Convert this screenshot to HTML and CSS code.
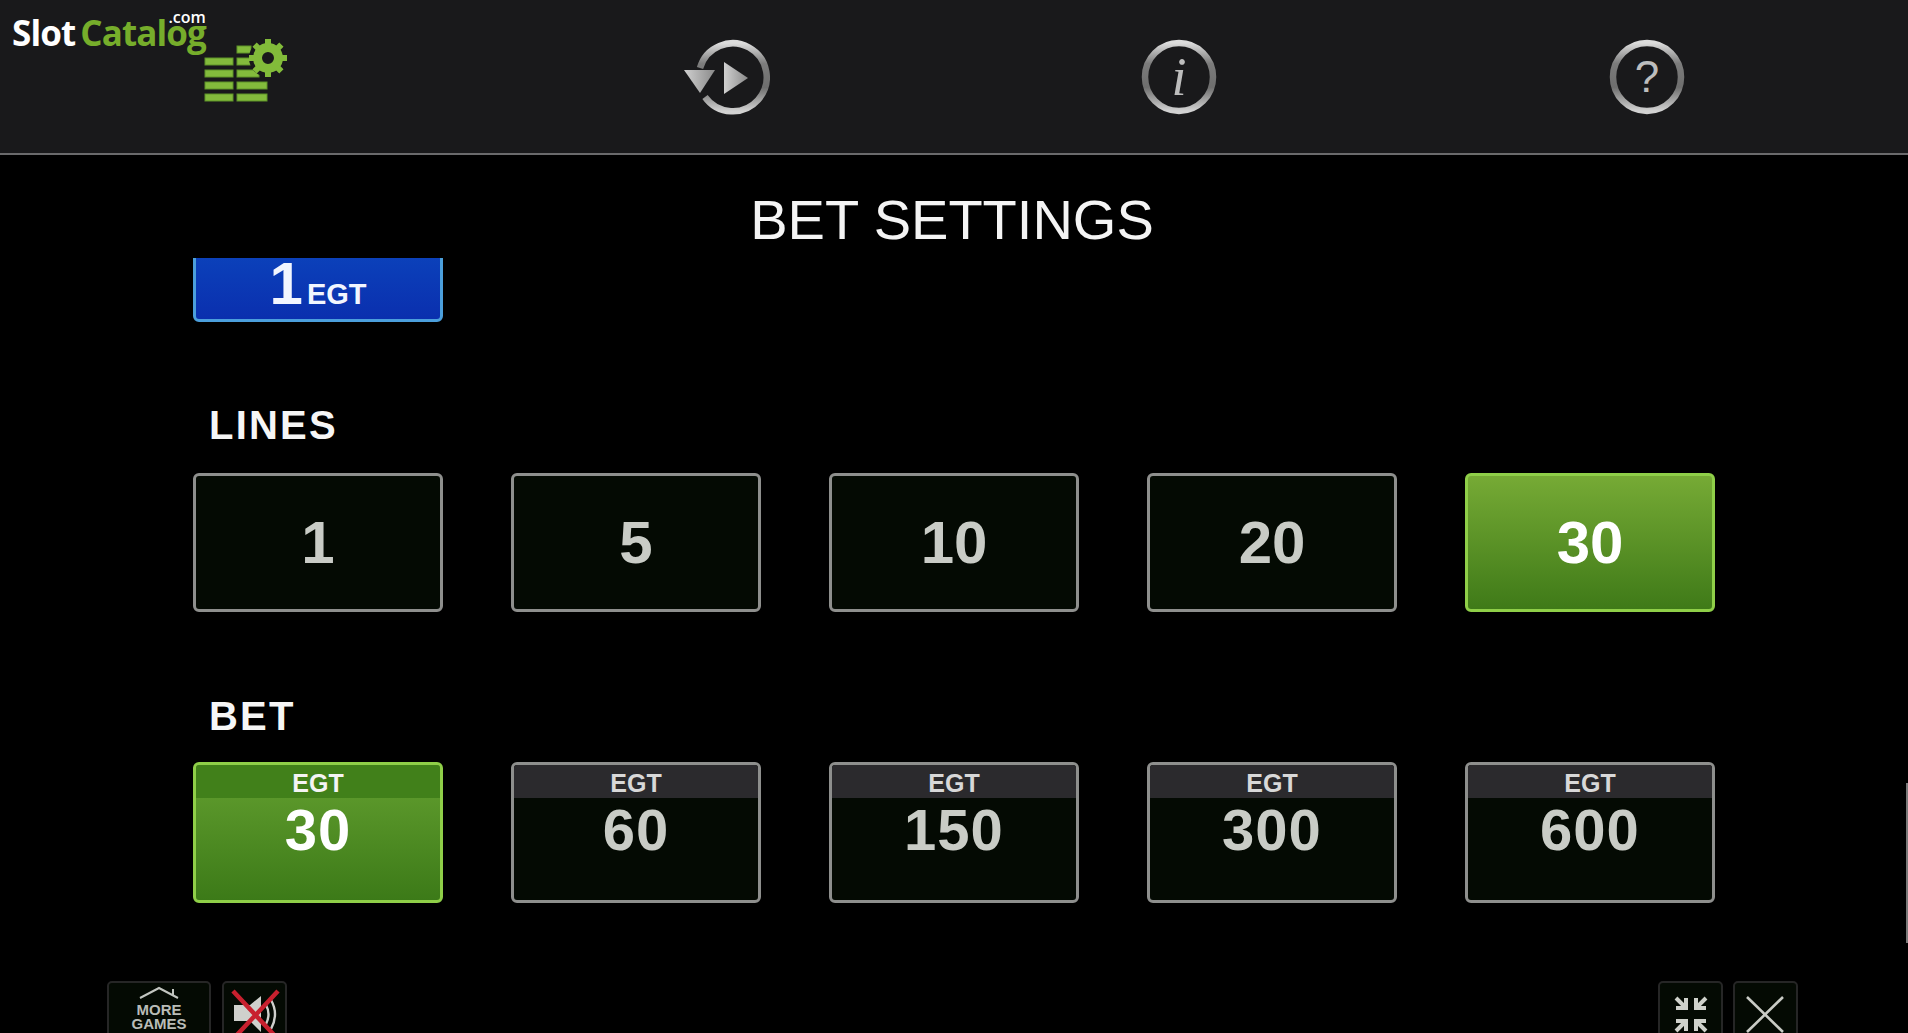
FILE: index.html
```html
<!DOCTYPE html>
<html lang="en">
<head>
    <meta charset="UTF-8">
    <title>Bet Settings</title>
    <link rel="stylesheet" href="styles.css">
</head>

<body>
<div class="page">
    <div class="logo"><span class="logo-slot">Slot</span><span class="logo-catalog">Catalog</span><span class="logo-com">.com</span></div>

    <div class="topbar">
        <svg class="icon-settings" width="86" height="66" viewBox="0 0 86 66">
            <g fill="#83bb3c" stroke="#5f9428" stroke-width="1">
                <rect x="1" y="19" width="28" height="7"/>
                <rect x="1" y="31" width="28" height="7"/>
                <rect x="1" y="43" width="28" height="7"/>
                <rect x="1" y="55" width="28" height="7"/>
                <rect x="33" y="7" width="14" height="7"/>
                <rect x="33" y="19" width="14" height="7"/>
                <rect x="33" y="31" width="22" height="7"/>
                <rect x="33" y="43" width="30" height="7"/>
                <rect x="33" y="55" width="30" height="7"/>
            </g>
            <circle cx="64" cy="19" r="19" fill="#19191b"/>
            <circle cx="64" cy="19" r="10.5" fill="none" stroke="#82bb3a" stroke-width="9"/>
            <g stroke="#82bb3a" stroke-width="6">
                <path d="M64 0v7M64 31v7M45 19h7M76 19h7M50.6 5.6l5 5M72.4 27.4l5 5M77.4 5.6l-5 5M55.6 27.4l-5 5"/>
            </g>
        </svg>

        <svg class="icon-replay" width="90" height="80" viewBox="0 0 90 80">
            <defs>
                <linearGradient id="ring" x1="0" y1="0" x2="0" y2="1">
                    <stop offset="0" stop-color="#dcdcdc"/>
                    <stop offset="0.3" stop-color="#7c7c7c"/>
                    <stop offset="0.65" stop-color="#6e6e6e"/>
                    <stop offset="1" stop-color="#d2d2d2"/>
                </linearGradient>
                <linearGradient id="tri" x1="0" y1="0" x2="1" y2="0">
                    <stop offset="0" stop-color="#d0d0d0"/>
                    <stop offset="1" stop-color="#8a8a8a"/>
                </linearGradient>
            </defs>
            <path d="M20 31A34 34 0 1 1 25 60" fill="none" stroke="url(#ring)" stroke-width="6.5"/>
            <path d="M44 25L68 41L44 57Z" fill="url(#tri)"/>
            <path d="M4 33H35L20 56Z" fill="url(#tri)"/>
        </svg>

        <svg class="icon-info" width="76" height="76" viewBox="0 0 76 76">
            <circle cx="38" cy="38" r="34" fill="none" stroke="url(#ring)" stroke-width="6.5"/>
            <text class="glyph-i" x="38" y="56" text-anchor="middle">i</text>
        </svg>

        <svg class="icon-help" width="76" height="76" viewBox="0 0 76 76">
            <circle cx="38" cy="38" r="34" fill="none" stroke="url(#ring)" stroke-width="6.5"/>
            <text class="glyph-help" x="38" y="53" text-anchor="middle">?</text>
        </svg>
    </div>

    <h1 class="title">BET SETTINGS</h1>

    <div class="clip-row">
        <div class="btn btn-blue"><span class="blue-num">1</span><span class="blue-cur">EGT</span></div>
    </div>

    <h2 class="label label-lines">LINES</h2>
    <div class="row row-lines">
        <div class="btn">1</div>
        <div class="btn">5</div>
        <div class="btn">10</div>
        <div class="btn">20</div>
        <div class="btn btn-on">30</div>
    </div>

    <h2 class="label">BET</h2>
    <div class="row row-bet">
        <div class="btn-bet bet-on"><div class="bet-cur">EGT</div><div class="bet-num">30</div></div>
        <div class="btn-bet"><div class="bet-cur">EGT</div><div class="bet-num">60</div></div>
        <div class="btn-bet"><div class="bet-cur">EGT</div><div class="bet-num">150</div></div>
        <div class="btn-bet"><div class="bet-cur">EGT</div><div class="bet-num">300</div></div>
        <div class="btn-bet"><div class="bet-cur">EGT</div><div class="bet-num">600</div></div>
    </div>

    <div class="toolbar">
        <div class="tool-group">
            <div class="tool tool-more">
                <svg class="house" width="44" height="13" viewBox="0 0 44 13">
                    <path d="M3 12L22 2L41 12M36 3V9" fill="none" stroke="#c2c5c0" stroke-width="2"/>
                </svg>
                <div class="more-text">MORE<br>GAMES</div>
            </div>
            <div class="tool tool-sound">
                <svg width="60" height="70" viewBox="0 0 60 70">
                    <path d="M10 22H26L37 13V49L26 38H10Z" fill="#cfd0cc"/>
                    <path d="M42 22Q47 31 42 41M47 17Q55 31 47 46" fill="none" stroke="#cfd0cc" stroke-width="2.4"/>
                    <path d="M9 8L52 54M54 8L11 54" stroke="#c8202e" stroke-width="4.5"/>
                </svg>
            </div>
        </div>
        <div class="tool-group tool-group-right">
            <div class="tool tool-small">
                <svg width="60" height="70" viewBox="0 0 60 70">
                    <g fill="none" stroke="#cfd1cb" stroke-width="4">
                        <path d="M16 15L26 25M26 15V25H16"/>
                        <path d="M46 15L36 25M36 15V25H46"/>
                        <path d="M16 48L26 38M26 48V38H16"/>
                        <path d="M46 48L36 38M36 48V38H46"/>
                    </g>
                </svg>
            </div>
            <div class="tool tool-small">
                <svg width="60" height="70" viewBox="0 0 60 70">
                    <path d="M12 14L48 49M48 14L12 49" stroke="#c9cbc5" stroke-width="2.6"/>
                </svg>
            </div>
        </div>
    </div>

    <div class="scrollbar"></div>
</div>
</body>
</html>
```

FILE: styles.css
```css
html, body{
    margin: 0;
    padding: 0;
    background-color: #000;
}
.page{
    position: relative;
    width: 1908px;
    height: 1033px;
    overflow: hidden;
    font-family: "Liberation Sans", Arial, sans-serif;
    color: #fff;
}

/* watermark sits over the top bar */
.logo{
    position: absolute;
    left: 12px;
    top: 10px;
    font-family: "Open Sans", sans-serif;
    font-weight: 700;
    font-size: 35px;
    line-height: 46px;
    letter-spacing: -0.9px;
}
.logo-slot{
    color: #fff;
}
.logo-catalog{
    color: #76ad2b;
    margin-left: 5px;
}
.logo-com{
    position: absolute;
    right: 0;
    top: -2px;
    font-size: 16px;
    line-height: 18px;
    font-weight: 600;
    letter-spacing: 0;
    color: #fff;
}

.topbar{
    display: flex;
    align-items: flex-start;
    height: 153px;
    background-color: #19191b;
    border-bottom: 2px solid #6a6a6c;
}
.topbar svg{
    display: block;
    flex: none;
}
.icon-settings{
    margin: 39px 0 0 204px;
}
.icon-replay{
    margin: 37px 0 0 390px;
}
.icon-info{
    margin: 39px 0 0 371px;
}
.icon-help{
    margin: 39px 0 0 392px;
}
.glyph-i{
    font-family: "Liberation Serif", serif;
    font-style: italic;
    font-size: 54px;
    fill: #bdbdbd;
}
.glyph-help{
    font-family: "Liberation Sans", sans-serif;
    font-size: 44px;
    fill: #bdbdbd;
}

.title{
    margin: 0;
    height: 103px;
    box-sizing: border-box;
    padding-top: 33px;
    font-size: 56px;
    line-height: 64px;
    font-weight: 400;
    text-align: center;
    color: #f4f4f4;
    letter-spacing: 0;
    transform: translateX(-2px);
}

.clip-row{
    display: flex;
    align-items: flex-end;
    height: 64px;
    margin-left: 193px;
    overflow: hidden;
}

.label{
    display: flex;
    align-items: flex-end;
    margin: 0 0 0 209px;
    height: 150px;
    box-sizing: border-box;
    padding-bottom: 23px;
    font-size: 40px;
    line-height: 46px;
    font-weight: 700;
    letter-spacing: 2.2px;
    color: #f6f6f6;
}
.label-lines{
    height: 151px;
    padding-bottom: 25px;
}

.row{
    display: grid;
    grid-template-columns: repeat(5, 250px);
    column-gap: 68px;
    margin-left: 193px;
}
.row-lines{
    height: 139px;
}
.row-bet{
    height: 141px;
}

.btn{
    display: flex;
    align-items: center;
    justify-content: center;
    flex: none;
    width: 250px;
    height: 139px;
    box-sizing: border-box;
    border: 3px solid #8e8f8d;
    border-radius: 6px;
    background-color: #040a03;
    font-size: 60px;
    font-weight: 700;
    color: #c9ccc6;
}
.btn-on{
    border-color: #8fcf48;
    background: linear-gradient(#76aa35, #3f7a18);
    color: #fff;
}
.btn-blue{
    border-color: #4b9fdc;
    background: linear-gradient(#0d55c8, #0a2fae);
    color: #f2f6ff;
    align-items: flex-end;
    padding-bottom: 10px;
}
.blue-num{
    font-size: 60px;
    line-height: 50px;
}
.blue-cur{
    font-size: 29px;
    line-height: 30px;
    margin-left: 4px;
}

.btn-bet{
    height: 141px;
    box-sizing: border-box;
    border: 3px solid #8e8f8d;
    border-radius: 6px;
    background-color: #040a03;
    overflow: hidden;
    text-align: center;
    color: #c9ccc6;
    font-weight: 700;
}
.bet-cur{
    height: 33px;
    background-color: #2b2a2d;
    font-size: 25px;
    line-height: 36px;
    color: #d8d8d8;
}
.bet-num{
    font-size: 58px;
    line-height: 64px;
    letter-spacing: 1px;
}
.bet-on{
    border-color: #8fcf48;
    background: linear-gradient(#64a030, #3c7a18);
    color: #fff;
}
.bet-on .bet-cur{
    background-color: #41801a;
    color: #f4f4f4;
}

.toolbar{
    display: flex;
    justify-content: space-between;
    margin-top: 78px;
    padding: 0 110px 0 107px;
}
.tool-group{
    display: flex;
    gap: 11px;
}
.tool-group-right{
    gap: 10px;
}
.tool{
    height: 72px;
    box-sizing: border-box;
    border: 2px solid #262626;
    border-radius: 5px;
    background-color: #040a03;
    overflow: hidden;
}
.tool svg{
    display: block;
}
.tool-more{
    width: 104px;
    text-align: center;
}
.house{
    margin: 3px auto 0;
}
.more-text{
    margin-top: 4px;
    font-size: 15px;
    line-height: 13.5px;
    font-weight: 700;
    color: #b9bcb7;
}
.tool-sound{
    width: 65px;
}
.tool-small{
    width: 65px;
}

/* thin scroll thumb on the window edge */
.scrollbar{
    position: absolute;
    right: 0;
    top: 783px;
    width: 2px;
    height: 160px;
    background-color: #7a7a7a;
}
```
